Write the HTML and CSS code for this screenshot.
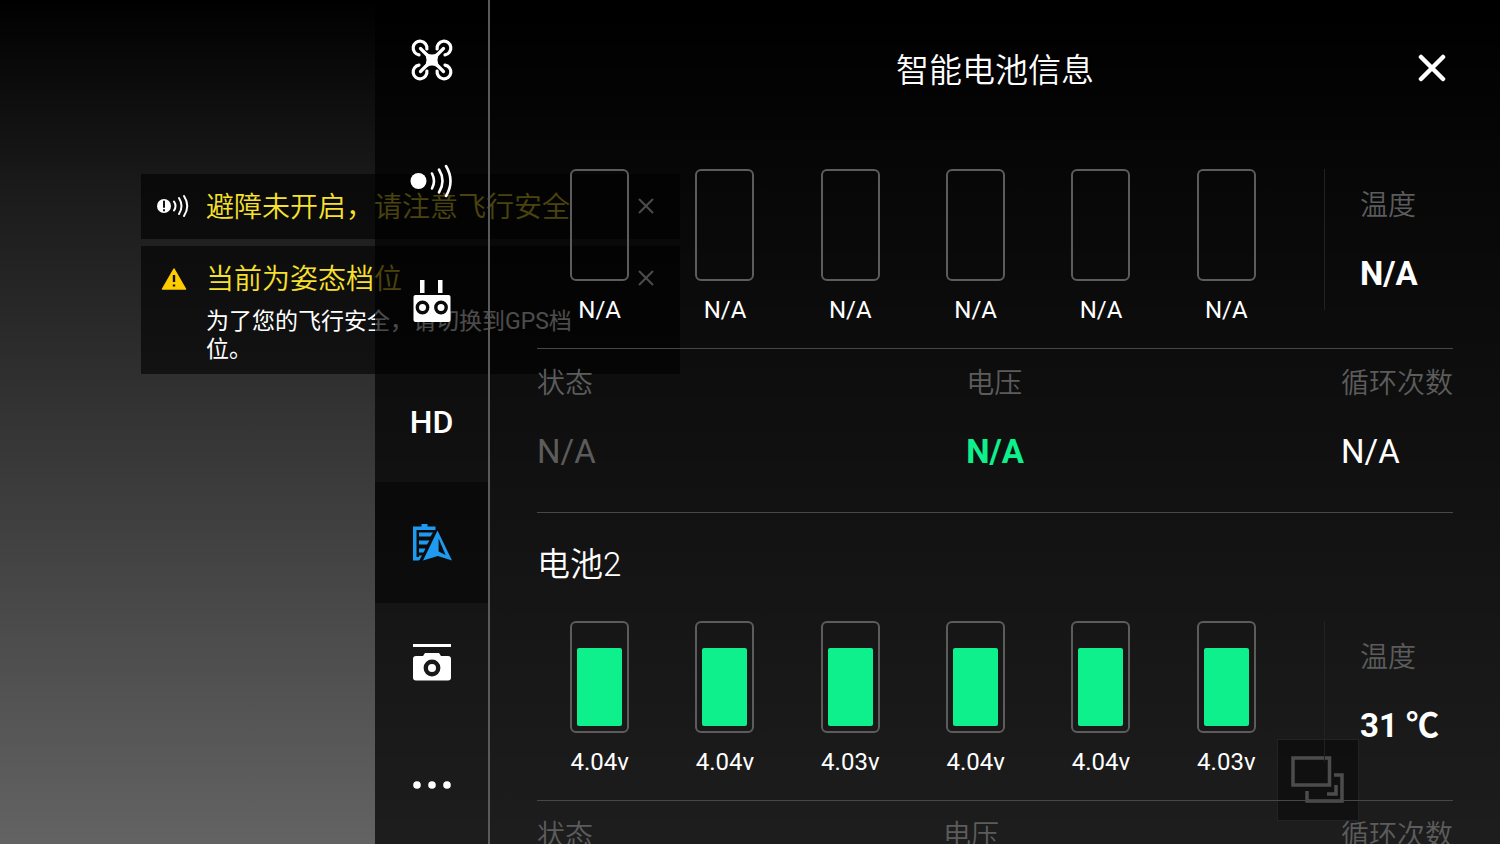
FILE: index.html
```html
<!DOCTYPE html>
<html lang="zh-CN">
<head>
<meta charset="utf-8">
<meta name="viewport" content="width=device-width, initial-scale=1">
<title>智能电池信息</title>
<link rel="stylesheet" href="styles.css">
</head>
<body>
<div class="alerts">
  <section class="alert">
    <svg class="alert-icon" viewBox="0 0 34 28" fill="none" stroke="#fff" stroke-width="2" stroke-linecap="round">
      <circle cx="7" cy="14" r="7" fill="#fff" stroke="none"/>
      <path d="M7 9.500v5.500M7 18v.4" stroke="#111"/>
      <path d="M17 9.500q3 4.500 0 9M22 6q5 8 0 16M27 4q6.500 10 0 20"/>
    </svg>
    <h2 class="alert-title">避障未开启，请注意飞行安全</h2>
    <button class="alert-close" aria-label="关闭"><svg class="alert-x" viewBox="0 0 16 16"><path d="M1 1l14 14M15 1L1 15"/></svg></button>
  </section>
  <section class="alert alert-tall">
    <svg class="alert-icon" viewBox="0 0 34 28">
      <path d="M17 5L28.500 25h-23z" fill="#fc0" stroke="#fc0" stroke-width="1.500" stroke-linejoin="round"/>
      <path d="M17 11v7M17 20.500v2" stroke="#111" stroke-width="2.400"/>
    </svg>
    <div>
      <h2 class="alert-title">当前为姿态档位</h2>
      <p class="alert-text">为了您的飞行安全，请切换到GPS档位。</p>
    </div>
    <button class="alert-close" aria-label="关闭"><svg class="alert-x" viewBox="0 0 16 16"><path d="M1 1l14 14M15 1L1 15"/></svg></button>
  </section>
</div>
<button class="pip" aria-label="切换画面">
  <svg class="pip-icon" viewBox="0 0 54 48" fill="none" stroke="currentColor" stroke-width="3.500">
    <path d="M2 2h36.500v27H2zM43 19h8v26H16V35"/>
    <path d="M45 29v9h-9"/>
  </svg>
</button>

<div class="panel">
  <nav class="tabs">
    <button class="tab" aria-label="飞控">
      <svg class="tab-icon" viewBox="0 0 44 44" fill="none" stroke="#fff" stroke-width="3.200" stroke-linecap="round">
        <path d="M16.900 11A6.900 6.900 0 1 0 9 16.900M27.100 11A6.900 6.900 0 1 1 35 16.900M16.900 33A6.900 6.900 0 1 1 9 27.100M27.100 33A6.900 6.900 0 1 0 35 27.100"/>
        <path d="M10.500 10.500l23 23M33.500 10.500l-23 23"/>
        <path d="M13 12Q22 21 31 12Q24 22 31 32Q22 23 13 32Q20 22 13 12z" fill="#fff" stroke="none"/>
        <path d="M18 17.500h8v9h-8z" fill="#fff" stroke="none"/>
      </svg>
    </button>
    <button class="tab" aria-label="感知">
      <svg class="tab-icon" viewBox="0 0 44 44" fill="none" stroke="#fff" stroke-width="2.600" stroke-linecap="round">
        <circle cx="8.500" cy="22" r="8" fill="#fff" stroke="none"/>
        <path d="M22 14.500q4 7.500 0 15M29 10.500q7 11.500 0 23M36 7q9 15 0 30"/>
      </svg>
    </button>
    <button class="tab" aria-label="遥控器">
      <svg class="tab-icon" viewBox="0 0 44 44">
        <path d="M10 1h4.500v13H10zM28 1h4.500v13H28z" fill="#fff"/>
        <rect x="3.500" y="16" width="37" height="27" rx="2" fill="#fff"/>
        <g fill="#fff" stroke="#0a0a0a" stroke-width="3.400"><circle cx="12.500" cy="28.500" r="5.200"/><circle cx="31" cy="28.500" r="5.200"/></g>
      </svg>
    </button>
    <button class="tab">HD</button>
    <button class="tab tab-active" aria-label="智能电池">
      <svg class="tab-icon" viewBox="0 0 44 44" fill="#1e9bf0">
        <path d="M3 5.500h8.500V3H17.500v2.500h8V9H6.500v27H9v3.500H3z"/>
        <path d="M9 11.500h14l-2.500 4H9zM9 19.500h10.500l-2.500 4H9zM9 27.500h6.500l-2 4H9zM9 34.500h3l-2.500 4.500H9z"/>
        <path fill-rule="evenodd" d="M27.500 9.500L42 39.500L27.800 35L13 39.500zM28.600 17.500v13l7 3.500z"/>
      </svg>
    </button>
    <button class="tab" aria-label="相机">
      <svg class="tab-icon" viewBox="0 0 44 44">
        <path d="M3 3h38v3H3zM6 15h7l2-3h14l2 3h7q3 0 3 3v18.500q0 3-3 3H6q-3 0-3-3V18q0-3 3-3z" fill="#fff"/>
        <circle cx="22" cy="27" r="6.200" fill="#fff" stroke="#191919" stroke-width="4.400"/>
      </svg>
    </button>
    <button class="tab" aria-label="更多">
      <svg class="tab-icon" viewBox="0 0 44 44" fill="#fff"><circle cx="7" cy="23" r="3.800"/><circle cx="22" cy="23" r="3.800"/><circle cx="37" cy="23" r="3.800"/></svg>
    </button>
  </nav>

  <main class="content">
    <header class="header">
      <h1 class="title">智能电池信息</h1>
      <button class="close" aria-label="关闭"><svg class="close-icon" viewBox="0 0 28 28"><path d="M3 3l22 22M25 3L3 25"/></svg></button>
    </header>

    <section class="battery">
      <div class="cells-row">
        <ul class="cells">
          <li class="cell"><span class="gauge"></span>N/A</li>
          <li class="cell"><span class="gauge"></span>N/A</li>
          <li class="cell"><span class="gauge"></span>N/A</li>
          <li class="cell"><span class="gauge"></span>N/A</li>
          <li class="cell"><span class="gauge"></span>N/A</li>
          <li class="cell"><span class="gauge"></span>N/A</li>
        </ul>
        <dl class="temp"><dt class="label">温度</dt><dd class="value value-bold">N/A</dd></dl>
      </div>
      <div class="stats">
        <dl class="stat"><dt class="label">状态</dt><dd class="value value-dim">N/A</dd></dl>
        <dl class="stat"><dt class="label">电压</dt><dd class="value value-bold value-green">N/A</dd></dl>
        <dl class="stat stat-end"><dt class="label">循环次数</dt><dd class="value">N/A</dd></dl>
      </div>
    </section>

    <section class="battery">
      <h2 class="battery-name">电池2</h2>
      <div class="cells-row">
        <ul class="cells">
          <li class="cell"><span class="gauge"><span class="fill"></span></span>4.04v</li>
          <li class="cell"><span class="gauge"><span class="fill"></span></span>4.04v</li>
          <li class="cell"><span class="gauge"><span class="fill"></span></span>4.03v</li>
          <li class="cell"><span class="gauge"><span class="fill"></span></span>4.04v</li>
          <li class="cell"><span class="gauge"><span class="fill"></span></span>4.04v</li>
          <li class="cell"><span class="gauge"><span class="fill"></span></span>4.03v</li>
        </ul>
        <dl class="temp"><dt class="label">温度</dt><dd class="value value-bold">31 ℃</dd></dl>
      </div>
      <div class="stats">
        <dl class="stat"><dt class="label">状态</dt></dl>
        <dl class="stat stat-wide"><dt class="label">电压</dt></dl>
        <dl class="stat stat-end"><dt class="label">循环次数</dt></dl>
      </div>
    </section>
  </main>
</div>
</body>
</html>
```
FILE: styles.css
```css
* { box-sizing: border-box; margin: 0; padding: 0; }
body {
  height: 100vh;
  overflow: hidden;
  position: relative;
  display: flex;
  justify-content: flex-end;
  background: linear-gradient(#000, #1a1a1a 22%, #636363);
  color: #fff;
  font-family: Roboto, "Noto Sans CJK SC", sans-serif;
  font-weight: 400;
}
button { border: 0; background: none; color: inherit; font: inherit; cursor: pointer; }
svg { display: block; }
ul { list-style: none; }

/* Warnings float over the camera view, below the settings panel */
.alerts {
  position: absolute;
  top: 174px;
  left: 141px;
  width: 539px;
  display: grid;
  gap: 7px;
}
.alert {
  display: grid;
  grid-template-columns: 34px 1fr 16px;
  column-gap: 15px;
  align-items: start;
  min-height: 65px;
  padding: 18px 26px 10px 16px;
  background: rgba(0, 0, 0, .6);
}
.alert-tall { min-height: 128px; }
.alert-icon { width: 34px; height: 28px; }
.alert-title { padding-top: 2px; font-size: 28px; line-height: 28px; font-weight: 350; color: #f7e12d; }
.alert-text { max-width: 384px; margin-top: 14px; font-size: 23px; line-height: 28px; }
.alert-close { padding: 6px 0; }
.alert-x { width: 16px; height: 16px; stroke: #fff; stroke-width: 2; }

.pip {
  position: absolute;
  right: 141px;
  bottom: 23px;
  width: 82px;
  height: 82px;
  display: grid;
  place-items: center;
  background: rgba(0, 0, 0, .4);
  border: 1px solid #777;
}
.pip-icon { width: 54px; height: 48px; }

.panel {
  position: relative;
  width: 75%;
  height: 100%;
  display: flex;
  background: rgba(0, 0, 0, .7);
}
.tabs {
  flex: none;
  width: 115px;
  display: flex;
  flex-direction: column;
  border-right: 2px solid #5a5a5a;
}
.tab {
  flex: 1;
  display: grid;
  place-items: center;
  font-size: 32px;
  font-weight: 500;
}
.tab-active { background: rgba(0, 0, 0, .4); }
.tab-icon { width: 44px; height: 44px; }

.content { flex: 1; padding: 0 47px; }
.header {
  display: grid;
  grid-template-columns: 1fr auto 1fr;
  align-items: center;
  height: 137px;
  padding-bottom: 2px;
}
.title { grid-column: 2; font-size: 33px; font-weight: 350; }
.close { justify-self: end; padding: 7px; }
.close-icon { width: 28px; height: 28px; stroke: #fff; stroke-width: 4.500; stroke-linecap: round; }

.battery-name { padding-top: 32px; font-size: 33px; line-height: 40px; font-weight: 350; }
.cells-row {
  display: grid;
  grid-template-columns: 1fr 129px;
  column-gap: 35px;
  padding: 32px 0 23px;
  border-bottom: 1px solid #474747;
}
.battery-name + .cells-row { padding-top: 36px; }
.cells { display: grid; grid-template-columns: repeat(6, 1fr); }
.cell {
  display: flex;
  flex-direction: column;
  align-items: center;
  gap: 14px;
  font-size: 24px;
  line-height: 30px;
}
.gauge {
  display: flex;
  align-items: flex-end;
  width: 59px;
  height: 112px;
  padding: 5px;
  border: 2px solid #5c5c5c;
  border-radius: 6px;
}
.fill { flex: 1; height: 80%; border-radius: 2px; background: #0df08c; }
.temp {
  align-self: start;
  height: 141px;
  padding: 14px 0 0 35px;
  border-left: 1px solid #222;
  white-space: nowrap;
}
.label { padding-top: 2px; font-size: 28px; line-height: 42px; font-weight: 350; color: #5c5c5c; }
.value { margin-top: 26px; font-size: 33px; line-height: 42px; }
.value-bold { font-weight: 700; }
.value-dim { color: #5c5c5c; }
.value-green { color: #0df08c; }

.stats {
  display: grid;
  grid-template-columns: 1fr auto 1fr;
  padding: 12px 0 39px;
  border-bottom: 1px solid #474747;
}
.stat-wide { min-width: 104px; }
.stat-end { justify-self: end; }
```
